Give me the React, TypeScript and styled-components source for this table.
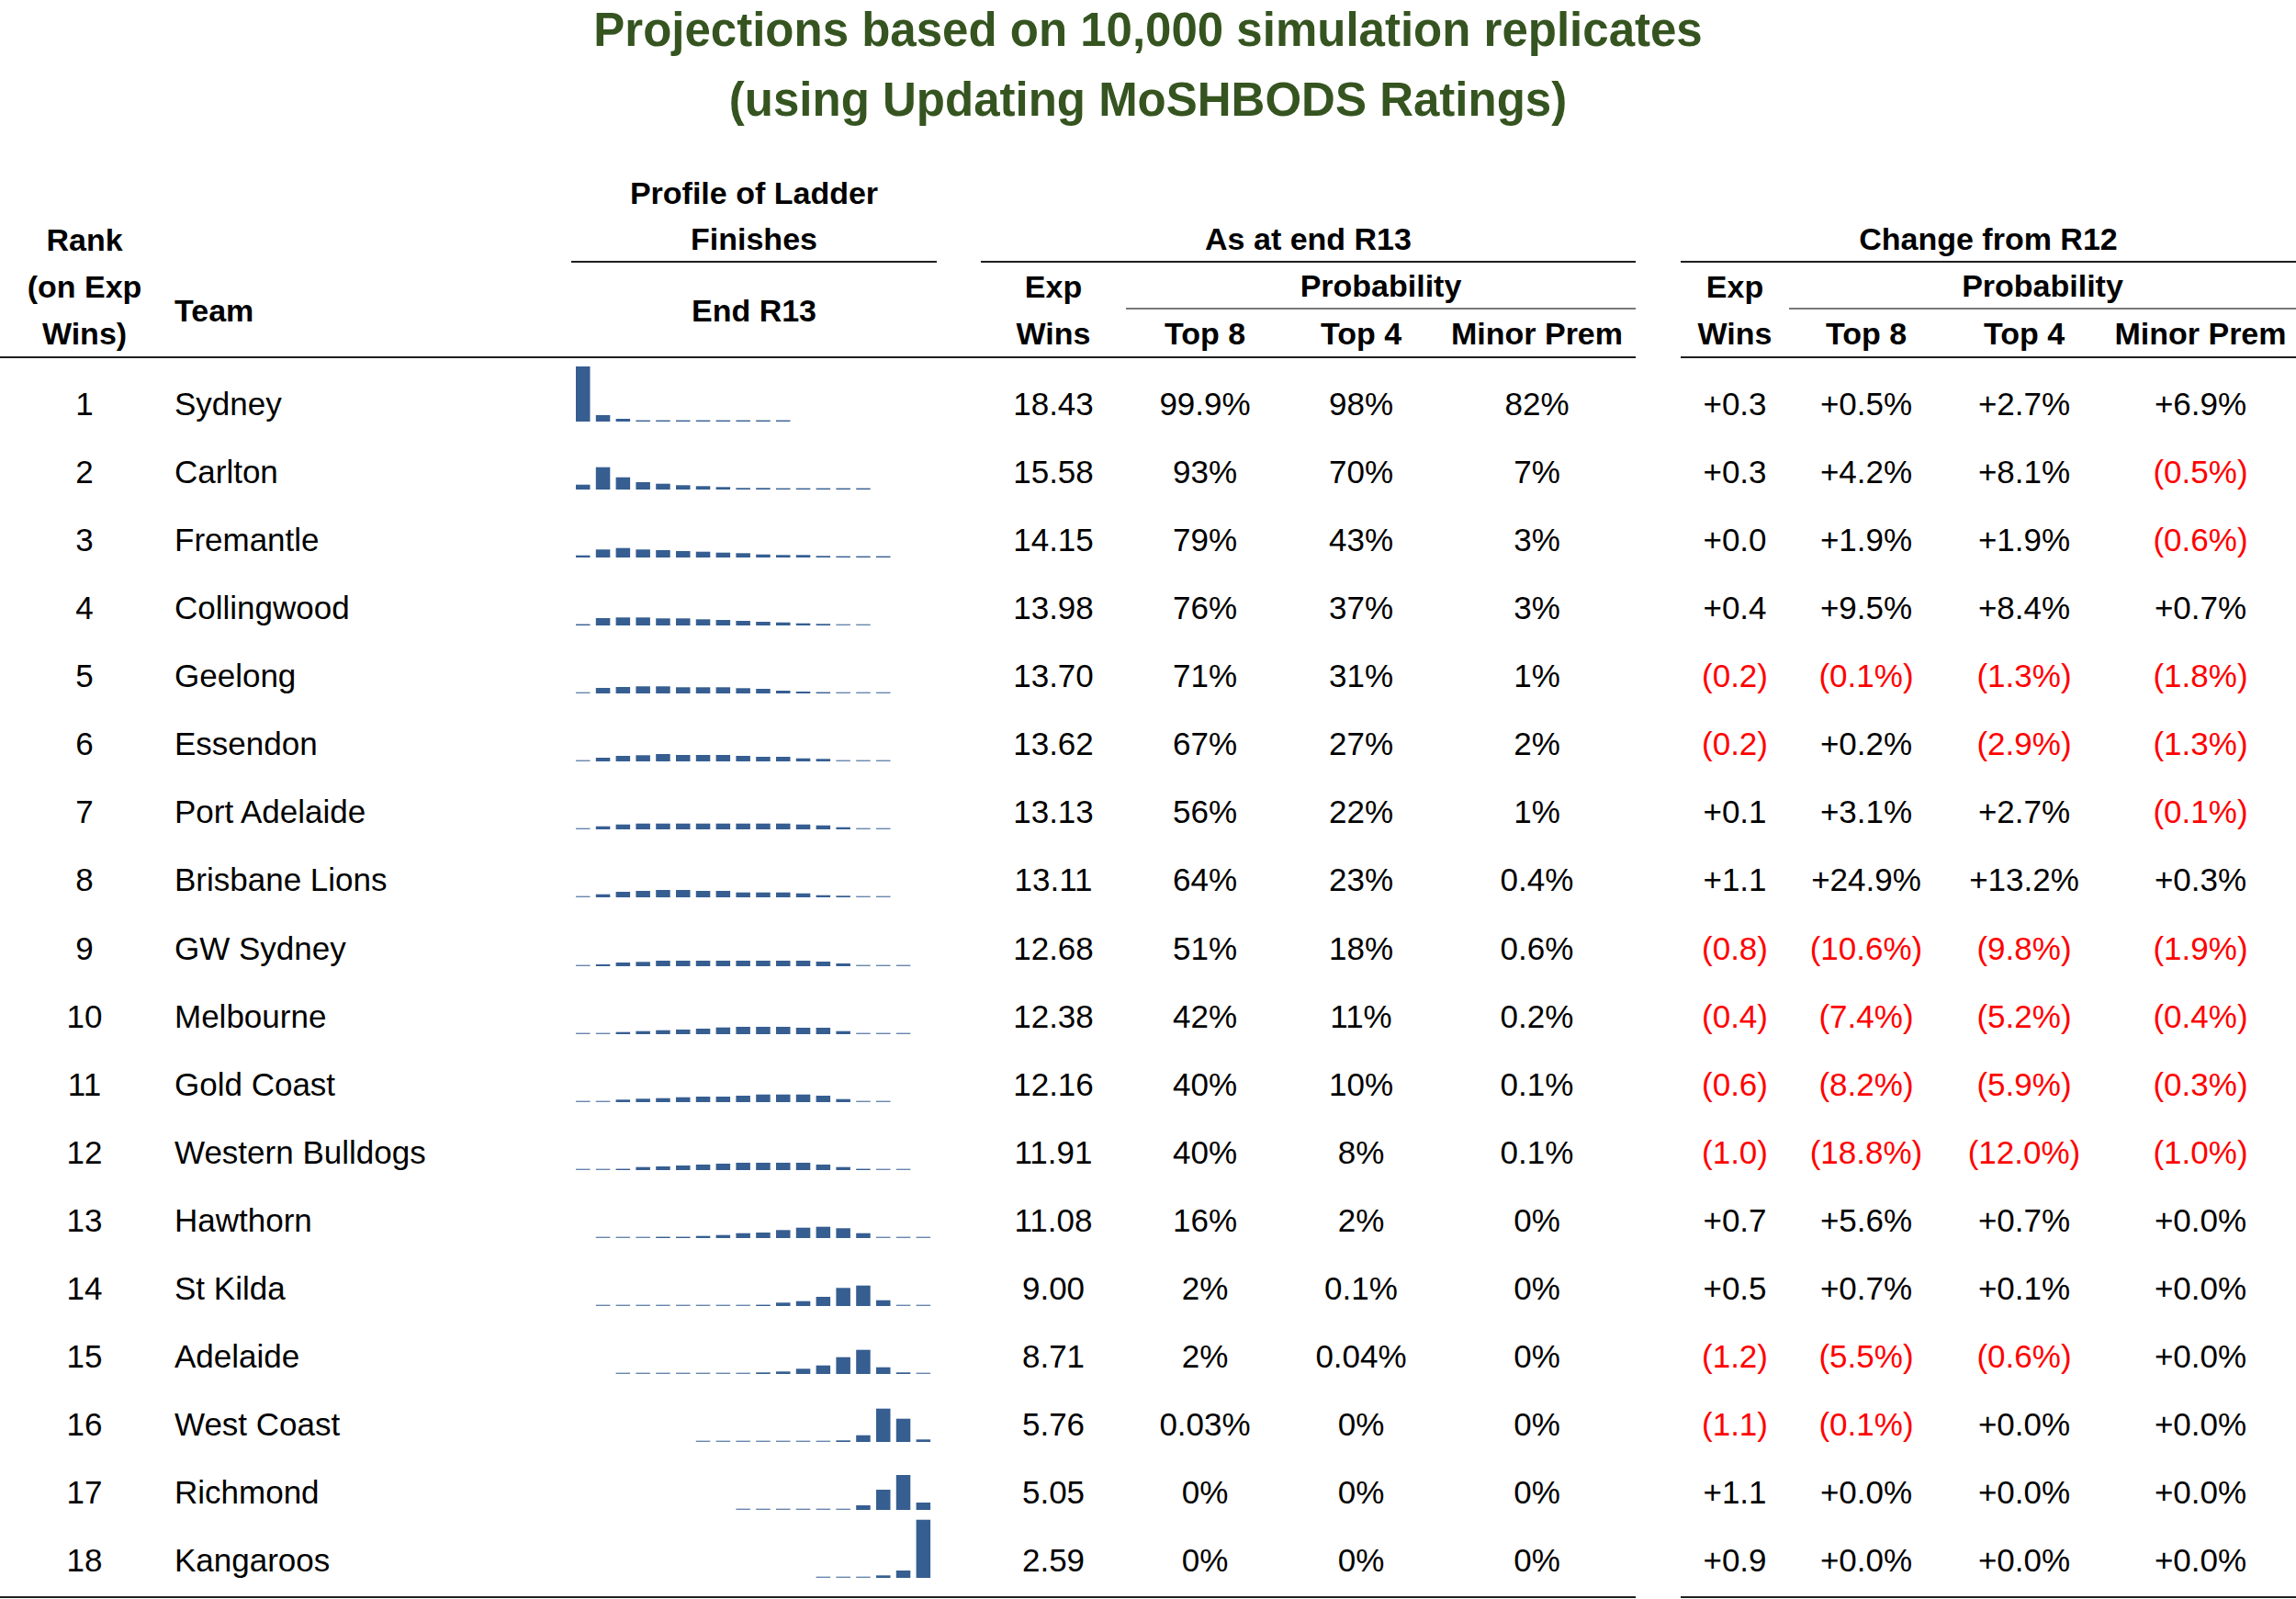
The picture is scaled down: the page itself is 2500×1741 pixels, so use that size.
import React from 'react';
import styled, { createGlobalStyle } from 'styled-components';

const GlobalStyle = createGlobalStyle`
  html, body {
    margin: 0;
    padding: 0;
    background: #fff;
  }
  body {
    font-family: "Liberation Sans", Arial, sans-serif;
    color: #000;
  }
`;

// rank | team | profile | gap | exp | top8 | top4 | minor | gap | exp | top8 | top4 | minor
const COLS = '184px 438px 398px 48px 158px 172px 168px 215px 49px 118px 168px 176px 208px';

const Page = styled.div`
  width: 2500px;
  height: 1741px;
  overflow: hidden;
  background: #fff;
`;

const Title = styled.h1`
  margin: -5px 0 0;
  font-size: 51px;
  line-height: 76px;
  font-weight: 700;
  color: #355420;
  text-align: center;
`;

const Head = styled.div`
  display: grid;
  grid-template-columns: ${COLS};
  grid-template-rows: repeat(4, 51px);
  margin-top: 37px;
  font-size: 34px;
  font-weight: 700;
`;

type Rule = 'dark' | 'gray';

const HeadCell = styled.div<{ $col: number; $row: number; $span?: number; $rows?: number; $rule?: Rule; $left?: boolean }>`
  grid-column: ${(p) => p.$col} / span ${(p) => p.$span ?? 1};
  grid-row: ${(p) => p.$row} / span ${(p) => p.$rows ?? 1};
  display: flex;
  align-items: center;
  justify-content: ${(p) => (p.$left ? 'flex-start' : 'center')};
  padding-left: ${(p) => (p.$left ? '6px' : '0')};
  padding-top: 2px;
  white-space: nowrap;
  border-bottom: ${(p) =>
    p.$rule === 'dark' ? '2px solid #1f1f1f' : p.$rule === 'gray' ? '2px solid #7a7a7a' : 'none'};
`;

const RuleRow = styled.div`
  display: grid;
  grid-template-columns: ${COLS};
  height: 2px;
`;

const RuleLine = styled.div<{ $col: number; $span: number }>`
  grid-column: ${(p) => p.$col} / span ${(p) => p.$span};
  background: #1f1f1f;
`;

const Body = styled.div`
  padding: 13px 0 2px;
`;

const Row = styled.div`
  display: grid;
  grid-template-columns: ${COLS};
  height: 74.07px;
  align-items: center;
  font-size: 35px;
`;

const Cell = styled.div<{ $left?: boolean; $neg?: boolean }>`
  text-align: ${(p) => (p.$left ? 'left' : 'center')};
  padding-left: ${(p) => (p.$left ? '6px' : '0')};
  color: ${(p) => (p.$neg ? '#ff0000' : '#000')};
  white-space: nowrap;
`;

const Spacer = styled.div``;

const SparkCell = styled.div`
  align-self: stretch;
  display: flex;
`;

const BAR_COLOR = '#365e91';

function Spark({ start, values }: { start: number; values: number[] }) {
  return (
    <svg width="398" height="74" viewBox="0 0 398 74" style={{ overflow: 'visible' }}>
      {values.map((v, i) => {
        const p = start + i;
        const h = Math.max(v, 1.4);
        return (
          <rect
            key={i}
            x={5 + (p - 1) * 21.8}
            y={56 - h}
            width={15.5}
            height={h}
            fill={BAR_COLOR}
            fillOpacity={v < 1 ? 0.75 : 1}
          />
        );
      })}
    </svg>
  );
}

type Team = {
  name: string;
  start: number;
  spark: number[];
  now: [string, string, string, string];
  chg: [string, string, string, string];
};

const teams: Team[] = [
  { name: 'Sydney', start: 1, spark: [60, 7, 3, 1.3, 1, 1, 1, 1, 1, 1, 1], now: ['18.43', '99.9%', '98%', '82%'], chg: ['+0.3', '+0.5%', '+2.7%', '+6.9%'] },
  { name: 'Carlton', start: 1, spark: [5.3, 24.3, 13.3, 8, 6.3, 4.7, 3.7, 2.7, 1.7, 1.7, 1, 1, 1, 1, 1], now: ['15.58', '93%', '70%', '7%'], chg: ['+0.3', '+4.2%', '+8.1%', '(0.5%)'] },
  { name: 'Fremantle', start: 1, spark: [2.3, 8.7, 10.3, 8.7, 8, 7, 6.3, 5.3, 4.7, 3.3, 2.7, 2.7, 1.7, 1, 1, 1], now: ['14.15', '79%', '43%', '3%'], chg: ['+0.0', '+1.9%', '+1.9%', '(0.6%)'] },
  { name: 'Collingwood', start: 1, spark: [1.3, 8, 8.7, 8.7, 7.7, 7.7, 6.7, 6, 5, 4, 3.3, 2.3, 1.7, 0.7, 0.7], now: ['13.98', '76%', '37%', '3%'], chg: ['+0.4', '+9.5%', '+8.4%', '+0.7%'] },
  { name: 'Geelong', start: 1, spark: [0.7, 6, 7, 7.7, 7.7, 6.7, 6.7, 6.7, 5.7, 5, 3, 2, 1.3, 0.7, 0.7, 0.7], now: ['13.70', '71%', '31%', '1%'], chg: ['(0.2)', '(0.1%)', '(1.3%)', '(1.8%)'] },
  { name: 'Essendon', start: 1, spark: [0.7, 4, 6, 6.7, 8, 7, 7, 7, 6, 5, 5, 3.3, 2.7, 0.7, 0.7, 0.7], now: ['13.62', '67%', '27%', '2%'], chg: ['(0.2)', '+0.2%', '(2.9%)', '(1.3%)'] },
  { name: 'Port Adelaide', start: 1, spark: [0.7, 3.3, 5.3, 6.3, 6.3, 6.3, 6.3, 6.3, 6.3, 6.3, 6.3, 5.3, 4.3, 2.3, 0.7, 0.7], now: ['13.13', '56%', '22%', '1%'], chg: ['+0.1', '+3.1%', '+2.7%', '(0.1%)'] },
  { name: 'Brisbane Lions', start: 1, spark: [0.7, 3.3, 6, 7, 8, 8, 7, 7, 5.3, 5.3, 5.3, 4.3, 2.3, 1.7, 0.7, 0.7], now: ['13.11', '64%', '23%', '0.4%'], chg: ['+1.1', '+24.9%', '+13.2%', '+0.3%'] },
  { name: 'GW Sydney', start: 1, spark: [0.7, 2, 4, 4.7, 6, 6, 6, 6, 6, 6, 6, 6, 5, 3, 0.7, 0.7, 0.7], now: ['12.68', '51%', '18%', '0.6%'], chg: ['(0.8)', '(10.6%)', '(9.8%)', '(1.9%)'] },
  { name: 'Melbourne', start: 1, spark: [0.7, 0.5, 2.3, 3.3, 4.3, 5, 6, 7.3, 8, 8, 8, 7, 7, 3.3, 0.7, 0.7, 0.7], now: ['12.38', '42%', '11%', '0.2%'], chg: ['(0.4)', '(7.4%)', '(5.2%)', '(0.4%)'] },
  { name: 'Gold Coast', start: 1, spark: [0.7, 0.5, 2.7, 3.7, 4.3, 5.3, 6, 6, 7, 8.3, 8.3, 8.3, 7, 3.3, 0.7, 0.7], now: ['12.16', '40%', '10%', '0.1%'], chg: ['(0.6)', '(8.2%)', '(5.9%)', '(0.3%)'] },
  { name: 'Western Bulldogs', start: 1, spark: [0.7, 0.7, 1.3, 3.3, 4, 5, 6, 7, 8, 8, 8, 8, 6, 3.3, 1.3, 0.7, 0.7], now: ['11.91', '40%', '8%', '0.1%'], chg: ['(1.0)', '(18.8%)', '(12.0%)', '(1.0%)'] },
  { name: 'Hawthorn', start: 2, spark: [0.7, 0.7, 0.7, 1.2, 1.2, 2.3, 3.3, 5.3, 6, 8.7, 11.3, 12.3, 10.7, 5.3, 0.7, 0.7, 0.7], now: ['11.08', '16%', '2%', '0%'], chg: ['+0.7', '+5.6%', '+0.7%', '+0.0%'] },
  { name: 'St Kilda', start: 2, spark: [0.7, 0.7, 0.7, 0.7, 0.7, 0.7, 0.7, 0.7, 1.3, 3.7, 5.3, 10, 19.7, 22.3, 6.3, 0.7, 0.7], now: ['9.00', '2%', '0.1%', '0%'], chg: ['+0.5', '+0.7%', '+0.1%', '+0.0%'] },
  { name: 'Adelaide', start: 3, spark: [0.7, 0.7, 0.7, 0.7, 0.7, 0.7, 0.7, 1.7, 2.7, 5.7, 9.3, 18.3, 26.3, 7.3, 1.7, 0.7], now: ['8.71', '2%', '0.04%', '0%'], chg: ['(1.2)', '(5.5%)', '(0.6%)', '+0.0%'] },
  { name: 'West Coast', start: 7, spark: [0.7, 0.7, 0.7, 0.7, 0.7, 0.7, 0.7, 1.7, 7.3, 36.3, 25.3, 2.7], now: ['5.76', '0.03%', '0%', '0%'], chg: ['(1.1)', '(0.1%)', '+0.0%', '+0.0%'] },
  { name: 'Richmond', start: 9, spark: [0.7, 0.7, 0.7, 0.7, 0.7, 0.7, 5, 22, 38, 8], now: ['5.05', '0%', '0%', '0%'], chg: ['+1.1', '+0.0%', '+0.0%', '+0.0%'] },
  { name: 'Kangaroos', start: 13, spark: [0.7, 0.7, 0.7, 2.7, 8, 63.3], now: ['2.59', '0%', '0%', '0%'], chg: ['+0.9', '+0.0%', '+0.0%', '+0.0%'] },
];

const isNeg = (s: string) => s.startsWith('(');

function Header() {
  return (
    <Head>
      <HeadCell $col={3} $row={1}>Profile of Ladder</HeadCell>

      <HeadCell $col={1} $row={2}>Rank</HeadCell>
      <HeadCell $col={1} $row={3}>(on Exp</HeadCell>
      <HeadCell $col={1} $row={4}>Wins)</HeadCell>

      <HeadCell $col={2} $row={3} $rows={2} $left>Team</HeadCell>

      <HeadCell $col={3} $row={2} $rule="dark">Finishes</HeadCell>
      <HeadCell $col={3} $row={3} $rows={2}>End R13</HeadCell>

      <HeadCell $col={5} $row={2} $span={4} $rule="dark">As at end R13</HeadCell>
      <HeadCell $col={5} $row={3}>Exp</HeadCell>
      <HeadCell $col={5} $row={4}>Wins</HeadCell>
      <HeadCell $col={6} $row={3} $span={3} $rule="gray">Probability</HeadCell>
      <HeadCell $col={6} $row={4}>Top 8</HeadCell>
      <HeadCell $col={7} $row={4}>Top 4</HeadCell>
      <HeadCell $col={8} $row={4}>Minor Prem</HeadCell>

      <HeadCell $col={10} $row={2} $span={4} $rule="dark">Change from R12</HeadCell>
      <HeadCell $col={10} $row={3}>Exp</HeadCell>
      <HeadCell $col={10} $row={4}>Wins</HeadCell>
      <HeadCell $col={11} $row={3} $span={3} $rule="gray">Probability</HeadCell>
      <HeadCell $col={11} $row={4}>Top 8</HeadCell>
      <HeadCell $col={12} $row={4}>Top 4</HeadCell>
      <HeadCell $col={13} $row={4}>Minor Prem</HeadCell>
    </Head>
  );
}

function TableRule() {
  return (
    <RuleRow>
      <RuleLine $col={1} $span={8} />
      <RuleLine $col={10} $span={4} />
    </RuleRow>
  );
}

export default function App() {
  return (
    <Page>
      <GlobalStyle />
      <Title>
        Projections based on 10,000 simulation replicates
        <br />
        (using Updating MoSHBODS Ratings)
      </Title>
      <Header />
      <TableRule />
      <Body>
        {teams.map((t, i) => (
          <Row key={t.name}>
            <Cell>{i + 1}</Cell>
            <Cell $left>{t.name}</Cell>
            <SparkCell>
              <Spark start={t.start} values={t.spark} />
            </SparkCell>
            <Spacer />
            {t.now.map((v, j) => (
              <Cell key={`n${j}`}>{v}</Cell>
            ))}
            <Spacer />
            {t.chg.map((v, j) => (
              <Cell key={`c${j}`} $neg={isNeg(v)}>
                {v}
              </Cell>
            ))}
          </Row>
        ))}
      </Body>
      <TableRule />
    </Page>
  );
}
